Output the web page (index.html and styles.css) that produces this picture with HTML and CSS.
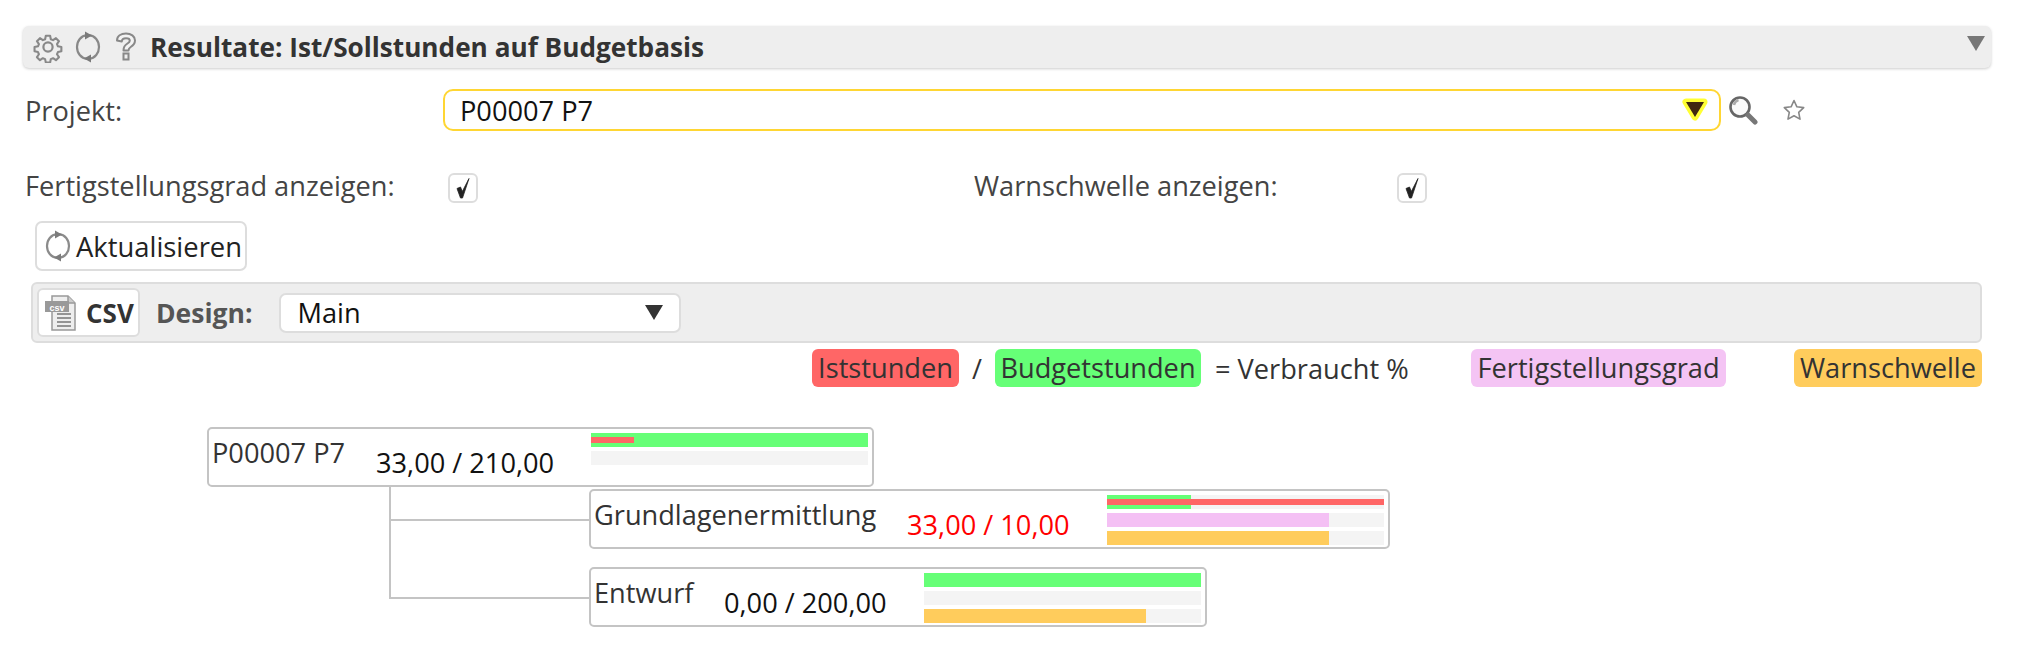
FILE: index.html
```html
<!DOCTYPE html>
<html lang="de">
<head>
    <meta charset="UTF-8">
    <title>Resultate: Ist/Sollstunden auf Budgetbasis</title>
    <link rel="stylesheet" href="styles.css">
</head>
<body>
    <div class="panel-head">
        <svg class="head-icon" width="32" height="32" viewBox="0 0 32 32"><path d="M13.5 3h5l.8 4 2.6 1.1 3.4-2.3 3.5 3.5-2.3 3.4 1.1 2.6 4 .8v5l-4 .8-1.1 2.6 2.300 3.4-3.500 3.5-3.400-2.300-2.600 1.100-.8 4h-5l-.8-4-2.600-1.100-3.400 2.300-3.500-3.500 2.300-3.400-1.100-2.600-4-.8v-5l4-.8 1.100-2.600-2.300-3.400 3.500-3.500 3.400 2.300 2.600-1.100z" transform="translate(2.2 2.2) scale(.86)" fill="none" stroke="#777" stroke-width="2.400" stroke-linejoin="round"/><circle cx="16" cy="16" r="4.600" fill="none" stroke="#777" stroke-width="2.200"/></svg>
        <svg class="head-icon" width="28" height="32" viewBox="0 0 28 32"><use href="#sync"/></svg>
        <svg class="head-icon help" width="24" height="32" viewBox="0 0 24 32"><path d="M3 9.500C3 5 7 2.500 12 2.500s9 2.700 9 7c0 3.300-2 5-4.300 6.500-1.700 1.100-2.200 1.800-2.200 3.500h-5c0-3.500 1-5 3.300-6.500 1.800-1.200 3-1.900 3-3.300 0-1.500-1.400-2.400-3.800-2.400S8 8.400 7.800 10.500z" fill="#f4f4f4" stroke="#777" stroke-width="2" stroke-linejoin="round"/><rect x="9.500" y="22.500" width="5" height="6" fill="none" stroke="#777" stroke-width="2"/></svg>
        <h1>Resultate: Ist/Sollstunden auf Budgetbasis</h1>
        <span class="collapse-arrow"></span>
    </div>

    <div class="form-row project-row">
        <label class="label-project">Projekt:</label>
        <div class="project-select">
            <span>P00007 P7</span>
            <svg class="glow-arrow" width="30" height="28" viewBox="0 0 30 28"><path d="M6 6h18L15 21z" fill="#402810" stroke="#ffff33" stroke-width="7" stroke-linejoin="round" paint-order="stroke"/></svg>
        </div>
        <svg class="search-icon" width="30" height="30" viewBox="0 0 30 30"><circle cx="12" cy="12" r="9.500" fill="#fafafa" stroke="#666" stroke-width="2.600"/><path d="M6 10a6.500 6.500 0 0 1 4.500-5" fill="none" stroke="#aaa" stroke-width="2.400"/><path d="M20 20l7 7" stroke="#777" stroke-width="5" stroke-linecap="round"/></svg>
        <svg class="star-icon" width="24" height="24" viewBox="0 0 24 24"><path d="M12 2.500l2.900 6.300 6.800.8-5 4.700 1.300 6.800-6-3.400-6 3.400 1.300-6.800-5-4.700 6.800-.8z" fill="none" stroke="#888" stroke-width="1.600" stroke-linejoin="round"/></svg>
    </div>

    <div class="form-row check-row">
        <label class="label-check">Fertigstellungsgrad anzeigen:</label>
        <span class="checkbox"><svg width="18" height="22" viewBox="0 0 18 22"><path d="M3 11.500l3.500-1.500 1.800 4.500L15 1.500 8.500 21h-2z" fill="#222" stroke="#222" stroke-width=".8" stroke-linejoin="round"/></svg></span>
        <label class="label-warn">Warnschwelle anzeigen:</label>
        <span class="checkbox"><svg width="18" height="22" viewBox="0 0 18 22"><path d="M3 11.500l3.500-1.500 1.800 4.500L15 1.500 8.500 21h-2z" fill="#222" stroke="#222" stroke-width=".8" stroke-linejoin="round"/></svg></span>
    </div>

    <button class="refresh-btn">
        <svg width="28" height="32" viewBox="0 0 28 32">
            <symbol id="sync" viewBox="0 0 28 32"><path d="M13 4.200C7 4.800 3 9.800 3 16s4 11.200 10 11.800M15 4.200c6 .6 10 5.600 10 11.800s-4 11.200-10 11.800" fill="none" stroke="#777" stroke-width="2.200"/><path d="M11 .5l7 4-7 4zM17 23.500l-7 4 7 4z" fill="#666"/></symbol>
            <use href="#sync"/>
        </svg>
        <span>Aktualisieren</span>
    </button>

    <div class="toolbar">
        <button class="csv-btn">
            <svg width="34" height="38" viewBox="0 0 34 38"><path d="M8 2h16l7 7v27H8z" fill="#eee" stroke="#999" stroke-width="1.500"/><path d="M24 2v7h7" fill="#ccc" stroke="#999" stroke-width="1.500"/><path d="M13 20h14M13 24h14M13 28h14M13 32h14" stroke="#777" stroke-width="1.500"/><rect x="1" y="7" width="24" height="11" fill="#999"/><text class="csv-mini" x="13" y="16.500" text-anchor="middle">csv</text></svg>
            CSV
        </button>
        <span class="design-label">Design:</span>
        <div class="design-select">
            <span>Main</span>
            <span class="select-arrow"></span>
        </div>
    </div>

    <div class="legend">
        <span class="tag tag-ist">Iststunden</span>
        <span class="legend-slash">/</span>
        <span class="tag tag-budget">Budgetstunden</span>
        <span class="legend-used">= Verbraucht %</span>
        <span class="tag tag-done">Fertigstellungsgrad</span>
        <span class="tag tag-warn">Warnschwelle</span>
    </div>

    <div class="tree">
        <div class="line line-v"></div>
        <div class="line line-h1"></div>
        <div class="line line-h2"></div>

        <div class="node node-root">
            <span class="node-name">P00007 P7</span>
            <span class="node-value value-root">33,00 / 210,00</span>
            <div class="bars">
                <div class="bar"><div class="fill green" style="width:100%"></div><div class="fill-over red" style="width:15.700%"></div></div>
                <div class="bar"></div>
            </div>
        </div>

        <div class="node node-a">
            <span class="node-name">Grundlagenermittlung</span>
            <span class="node-value value-a">33,00 / 10,00</span>
            <div class="bars">
                <div class="bar"><div class="fill green" style="width:30.300%"></div><div class="fill-over red" style="width:100%"></div></div>
                <div class="bar"><div class="fill pink" style="width:80%"></div></div>
                <div class="bar"><div class="fill orange" style="width:80%"></div></div>
            </div>
        </div>

        <div class="node node-b">
            <span class="node-name">Entwurf</span>
            <span class="node-value value-b">0,00 / 200,00</span>
            <div class="bars">
                <div class="bar"><div class="fill green" style="width:100%"></div></div>
                <div class="bar"></div>
                <div class="bar"><div class="fill orange" style="width:80%"></div></div>
            </div>
        </div>
    </div>
</body>
</html>
```

FILE: styles.css
```css
* {
    box-sizing: border-box;
}

body {
    margin: 0;
    font-family: "Open Sans", sans-serif;
    font-size: 27.2px;
    color: #333;
    background: #fff;
}

svg {
    display: block;
    flex: none;
}

/* Panel header */
.panel-head {
    display: flex;
    align-items: center;
    height: 42px;
    margin: 26px 39px 0 23px;
    padding-left: 9px;
    gap: 10px;
    position: relative;
    background: #eee;
    border-radius: 6px;
    box-shadow: 0 1px 3px rgba(0, 0, 0, 0.2);
}

.panel-head h1 {
    margin: 0 0 0 2px;
    font-size: 26.2px;
    font-weight: 700;
    line-height: 42px;
    color: #333;
}

.head-icon {
    opacity: 0.85;
}

.help {
    margin-left: 2px;
}

.collapse-arrow {
    position: absolute;
    right: 6px;
    top: 10px;
    border-left: 9px solid transparent;
    border-right: 9px solid transparent;
    border-top: 15px solid #777;
}

/* Form rows */
.form-row {
    display: flex;
    align-items: center;
    padding-left: 25px;
}

.project-row {
    height: 42px;
    margin-top: 21px;
}

.label-project {
    width: 418px;
    color: #444;
}

.project-select {
    display: flex;
    align-items: center;
    justify-content: space-between;
    width: 1278px;
    height: 42px;
    padding: 0 9px 0 15px;
    border: 2px solid #ffd633;
    border-radius: 10px;
    color: #111;
}

.search-icon {
    margin-left: 7px;
}

.star-icon {
    margin-left: 24px;
}

.check-row {
    height: 30px;
    margin-top: 42px;
}

.label-check {
    width: 423px;
    margin-bottom: 5px;
    color: #444;
}

.label-warn {
    width: 423px;
    margin-bottom: 5px;
    margin-left: 496px;
    color: #444;
}

.checkbox {
    display: flex;
    align-items: center;
    justify-content: center;
    width: 30px;
    height: 30px;
    border: 2px solid #ddd;
    border-radius: 6px;
}

/* Buttons */
.refresh-btn {
    display: flex;
    align-items: center;
    gap: 4px;
    width: 212px;
    height: 50px;
    margin: 18px 0 0 35px;
    padding: 0 0 0 7px;
    font-family: inherit;
    font-size: 27.4px;
    color: #222;
    background: #fff;
    border: 2px solid #ddd;
    border-radius: 7px;
}

.refresh-btn svg {
    opacity: 0.85;
}

.toolbar {
    display: flex;
    align-items: center;
    height: 61px;
    margin: 11px 48px 0 31px;
    padding-left: 6px;
    background: #eee;
    border: 2px solid #ddd;
    border-radius: 6px;
}

.csv-btn {
    display: flex;
    align-items: center;
    gap: 8px;
    width: 103px;
    height: 49px;
    margin-left: -2px;
    padding: 0 0 0 5px;
    font-family: inherit;
    font-size: 26px;
    font-weight: 700;
    color: #333;
    background: #fff;
    border: 2px solid #ddd;
    border-radius: 6px;
}

.csv-mini {
    font-family: "Liberation Sans", sans-serif;
    font-size: 9px;
    font-weight: 700;
    fill: #fff;
}

.design-label {
    margin-left: 16px;
    font-size: 26.5px;
    font-weight: 700;
    color: #555;
}

.design-select {
    display: flex;
    align-items: center;
    justify-content: space-between;
    width: 402px;
    height: 40px;
    margin-left: 27px;
    padding: 0 16px 0 16px;
    color: #111;
    background: #fff;
    border: 2px solid #ddd;
    border-radius: 7px;
}

.select-arrow {
    border-left: 9px solid transparent;
    border-right: 9px solid transparent;
    border-top: 15px solid #333;
}

/* Legend */
.legend {
    display: flex;
    align-items: center;
    height: 38px;
    margin-top: 6px;
    padding-left: 812px;
}

.tag {
    display: block;
    height: 38px;
    line-height: 38px;
    text-align: center;
    white-space: nowrap;
    border-radius: 6px;
}

.tag-ist {
    width: 147px;
    background: #ff6666;
}

.tag-budget {
    width: 206px;
    margin-left: 15px;
    background: #66ff77;
}

.tag-done {
    width: 255px;
    margin-left: 63px;
    background: #f4c4f4;
}

.tag-warn {
    width: 188px;
    margin-left: 68px;
    background: #ffcc5c;
}

.legend-slash {
    width: 8px;
    margin-left: 13px;
}

.legend-used {
    width: 192px;
    margin-left: 14px;
    margin-right: 1px;
    white-space: nowrap;
}

/* Tree diagram */
.tree {
    position: relative;
    height: 240px;
    margin-top: 40px;
}

.line {
    position: absolute;
    background: #c4c4c4;
}

.line-v {
    left: 389px;
    top: 0;
    width: 2px;
    height: 172px;
}

.line-h1 {
    left: 389px;
    top: 92px;
    width: 202px;
    height: 2px;
}

.line-h2 {
    left: 389px;
    top: 170px;
    width: 202px;
    height: 2px;
}

.node {
    position: absolute;
    height: 60px;
    background: #fff;
    border: 2px solid #c4c4c4;
    border-radius: 5px;
}

.node-root {
    left: 207px;
    top: 0;
    width: 667px;
}

.node-a {
    left: 589px;
    top: 62px;
    width: 801px;
}

.node-b {
    left: 589px;
    top: 140px;
    width: 618px;
}

.node-name {
    position: absolute;
    left: 3px;
    top: 7px;
    line-height: 33px;
    white-space: nowrap;
}

.node-value {
    position: absolute;
    top: 17px;
    line-height: 33px;
    color: #111;
    white-space: nowrap;
}

.value-root {
    left: 167px;
}

.value-a {
    left: 316px;
    color: #f00;
}

.value-b {
    left: 133px;
}

.bars {
    position: absolute;
    right: 4px;
    top: 4px;
    display: flex;
    flex-direction: column;
    gap: 4px;
    width: 277px;
}

.bar {
    position: relative;
    height: 14px;
    background: #f4f4f4;
}

.fill {
    height: 100%;
}

.fill-over {
    position: absolute;
    left: 0;
    top: 4px;
    height: 6px;
}

.green {
    background: #66ff77;
}

.red {
    background: #ff6666;
}

.pink {
    background: #f4c0f4;
}

.orange {
    background: #ffcc5c;
}
```
